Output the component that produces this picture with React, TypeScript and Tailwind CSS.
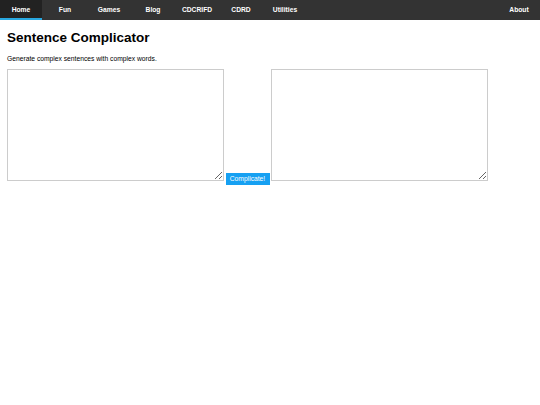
import { useState } from 'react';

const navItems = ['Home', 'Fun', 'Games', 'Blog', 'CDCRIFD', 'CDRD', 'Utilities'];

export default function App() {
  const [active] = useState('Home');
  const [input, setInput] = useState('');
  const [output, setOutput] = useState('');

  const complicate = () => {
    setOutput(input);
  };

  return (
    <div className="min-h-screen bg-white text-black font-['Liberation_Sans',Arial,sans-serif]">
      <nav className="flex h-[20px] bg-[#333333]">
        <div className="flex gap-[2px]">
          {navItems.map((item) => (
            <a
              key={item}
              href="#"
              className={
                item === active
                  ? 'flex h-[20px] w-[42px] items-center justify-center border-b-[2px] border-[#29a8e0] bg-[#222222] pt-[2px] text-[6.72px] font-bold text-white'
                  : 'flex h-[20px] w-[42px] items-center justify-center text-[6.72px] font-bold text-white'
              }
            >
              {item}
            </a>
          ))}
        </div>
        <a href="#" className="ml-auto flex h-[20px] w-[42px] items-center justify-center text-[6.72px] font-bold text-white">
          About
        </a>
      </nav>

      <main className="px-[7px]">
        <h1 className="mt-[10px] text-[13.5px] font-bold leading-[16px]">Sentence Complicator</h1>
        <p className="mt-[8.5px] text-[6.72px] leading-[8px]">Generate complex sentences with complex words.</p>

        <div className="mt-[6.5px] flex items-start gap-[1.5px]">
          <textarea
            value={input}
            onChange={(e) => setInput(e.target.value)}
            className="h-[112px] w-[217px] border border-[#cccccc] bg-white p-[1px] text-[6.72px] outline-none"
          />
          <button
            onClick={complicate}
            className="mt-[103.5px] h-[12px] w-[44px] bg-[#16a0f2] text-[6.72px] leading-[12px] text-white"
          >
            Complicate!
          </button>
          <textarea
            value={output}
            readOnly
            className="h-[112px] w-[217px] border border-[#cccccc] bg-white p-[1px] text-[6.72px] outline-none"
          />
        </div>
      </main>
    </div>
  );
}
